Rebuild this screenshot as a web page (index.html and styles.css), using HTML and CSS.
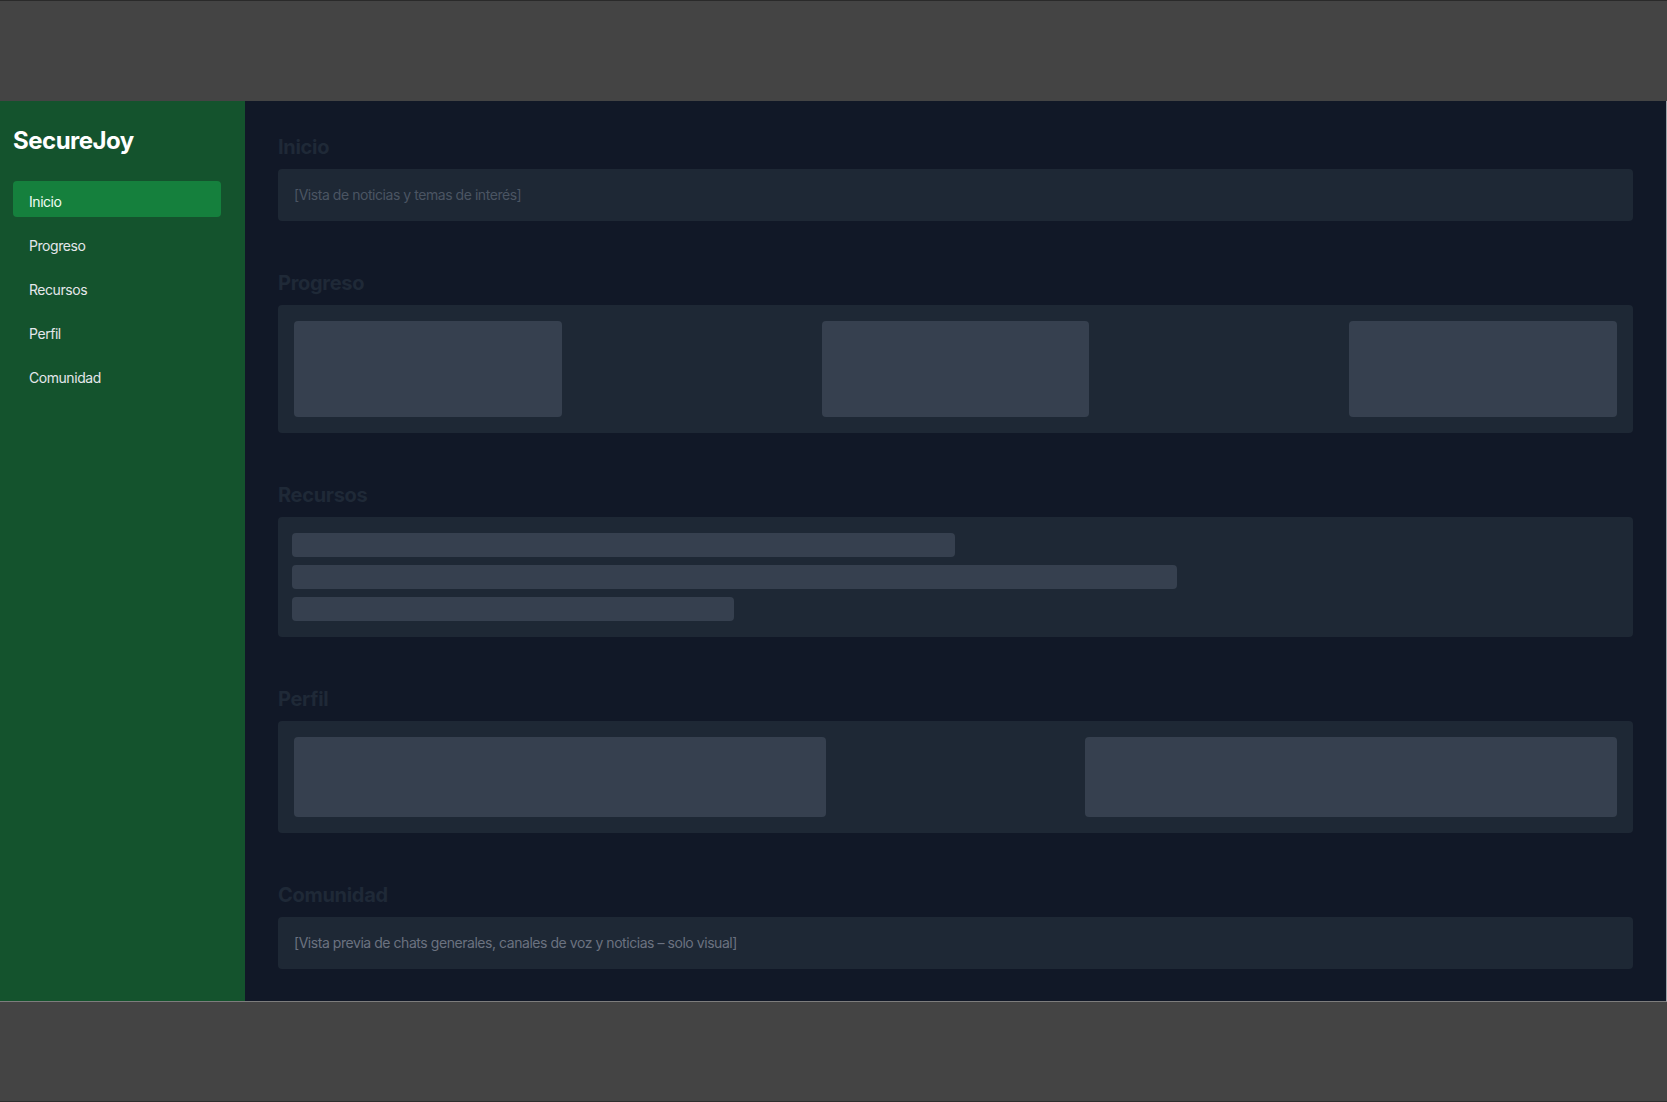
FILE: index.html
```html
<!DOCTYPE html>
<html lang="es">
<head>
<meta charset="utf-8">
<title>SecureJoy</title>
<link rel="stylesheet" href="styles.css">
</head>
<body>
<div class="frame">
  <div class="app">
    <aside class="sidebar">
      <h1 class="brand">SecureJoy</h1>
      <nav class="nav">
        <a class="nav-item active">Inicio</a>
        <a class="nav-item">Progreso</a>
        <a class="nav-item">Recursos</a>
        <a class="nav-item">Perfil</a>
        <a class="nav-item">Comunidad</a>
      </nav>
    </aside>
    <main class="main">
      <section class="section">
        <h2 class="section-title">Inicio</h2>
        <div class="card card-text dim">[Vista de noticias y temas de interés]</div>
      </section>
      <section class="section">
        <h2 class="section-title">Progreso</h2>
        <div class="card row">
          <div class="block block-fifth"></div>
          <div class="block block-fifth"></div>
          <div class="block block-fifth"></div>
        </div>
      </section>
      <section class="section">
        <h2 class="section-title">Recursos</h2>
        <div class="card bars">
          <div class="bar bar-half"></div>
          <div class="bar bar-two-thirds"></div>
          <div class="bar bar-third"></div>
        </div>
      </section>
      <section class="section">
        <h2 class="section-title">Perfil</h2>
        <div class="card row">
          <div class="block block-two-fifths"></div>
          <div class="block block-two-fifths"></div>
        </div>
      </section>
      <section class="section last">
        <h2 class="section-title">Comunidad</h2>
        <div class="card card-text">[Vista previa de chats generales, canales de voz y noticias – solo visual]</div>
      </section>
    </main>
  </div>
</div>
</body>
</html>
```
FILE: styles.css
```css
* { box-sizing: border-box; }

html, body {
  margin: 0;
  padding: 0;
}

body {
  background: #444444;
  height: 1102px;
  overflow: hidden;
  border-top: 1px solid #2a2a2a;
  border-bottom: 1px solid #2e2e2e;
  font-family: Inter, "Noto Sans", "Liberation Sans", sans-serif;
}

.frame {
  padding-top: 100px;
}

.app {
  display: flex;
  width: 1667px;
  height: 901px;
  border-right: 1px solid #9aa0a6;
  border-bottom: 1px solid #7d7d7d;
  overflow: hidden;
}

.sidebar {
  width: 245px;
  flex-shrink: 0;
  background: #14532d;
  padding: 24px 24px 0 13px;
}

.brand {
  margin: 0 0 24px 0;
  font-size: 24px;
  line-height: 32px;
  font-weight: 700;
  letter-spacing: -0.5px;
  color: #ffffff;
}

.nav {
  display: flex;
  flex-direction: column;
  gap: 8px;
}

.nav-item {
  display: block;
  height: 36px;
  padding: 11px 16px 5px 16px;
  font-size: 14px;
  line-height: 20px;
  letter-spacing: -0.45px;
  color: #e5e7eb;
  border-radius: 4px;
}

.nav-item.active {
  background: #15803d;
  color: #f0fdf4;
}

.main {
  flex: 1;
  background: #111827;
  padding: 32px 33px 0 33px;
}

.section {
  margin-bottom: 48px;
}

.section.last {
  margin-bottom: 0;
}

.section-title {
  margin: 0 0 8px 0;
  font-size: 20px;
  line-height: 28px;
  font-weight: 700;
  letter-spacing: -0.3px;
  color: #1f2937;
}

.card {
  background: #1e2835;
  border-radius: 4px;
  padding: 16px;
}

.card-text {
  font-size: 14px;
  line-height: 20px;
  letter-spacing: -0.45px;
  color: #6b7280;
}

.card-text.dim {
  color: #4b5563;
}

.row {
  display: flex;
  justify-content: space-between;
}

.block {
  background: #36404f;
  border-radius: 4px;
}

.block-fifth {
  width: 20.25%;
  height: 96px;
}

.block-two-fifths {
  width: 40.2%;
  height: 80px;
}

.bars {
  display: flex;
  flex-direction: column;
  gap: 8px;
  padding: 16px 16px 16px 14px;
}

.bar {
  height: 24px;
  background: #36404f;
  border-radius: 4px;
}

.bar-half { width: 663px; }
.bar-two-thirds { width: 885px; }
.bar-third { width: 442px; }
```
